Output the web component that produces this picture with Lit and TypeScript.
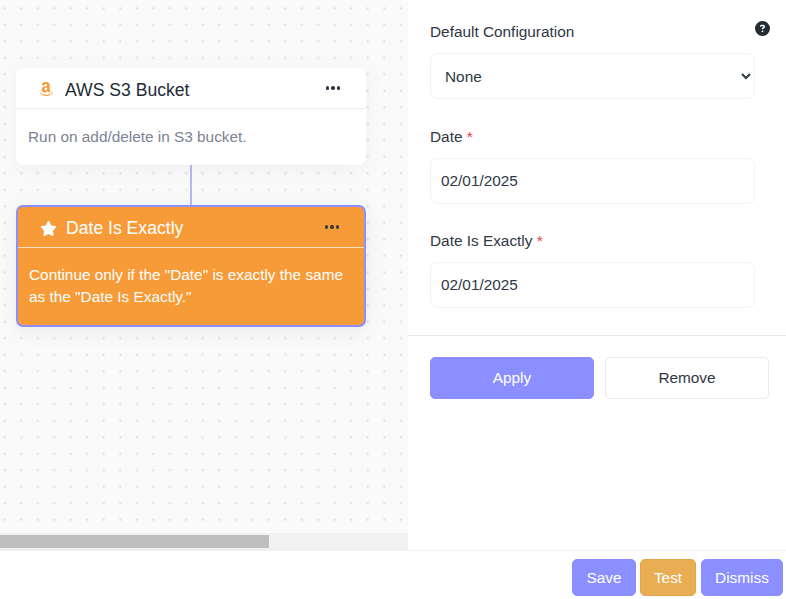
import { LitElement, html, css, svg } from "lit";
import { customElement } from "lit/decorators.js";

const amazon = svg`<path d="M257.2 162.7c-48.7 1.8-169.5 15.5-169.5 117.5 0 109.5 138.3 114 183.5 43.2 6.5 10.2 35.4 37.5 45.3 46.8l56.8-56S341 288.9 341 261.4V114.3C341 89 316.5 32 228.7 32 140.7 32 94 87 94 136.3l73.5 6.8c16.3-49.5 54.2-49.5 54.2-49.5 40.7-.1 35.5 29.8 35.5 69.1zm0 86.8c0 80-84.2 68-84.2 17.2 0-47.2 50.5-56.7 84.2-57.8v40.6zm136 163.5c-7.7 10-70 67-174.5 67S34.2 408.5 9.7 379c-6.8-7.7 1-11.3 5.5-8.3C88.5 415.2 203 488.5 387.7 401c7.5-3.7 13.3 2 5.5 12zm39.8 2.2c-6.5 15.8-16 26.8-21.2 31-5.5 4.5-9.5 2.7-6.5-3.8s19.3-46.5 12.7-55c-6.5-8.3-37-4.3-48-3.2-10.8 1-13 2-14-.3-2.3-5.7 21.7-15.5 37.5-17.5 15.7-1.8 41-.8 46 5.7 3.7 5.1 0 27.1-6.5 43.1z"/>`;
const star = svg`<path d="M316.9 18C311.6 7 300.4 0 288.1 0s-23.4 7-28.8 18L195 150.3 51.4 171.5c-12 1.8-22 10.2-25.7 21.7s-.7 24.2 7.9 32.7L137.8 329 113.2 474.7c-2 12 3 24.2 12.9 31.3s23 8 33.8 2.3l128.3-68.5 128.3 68.5c10.8 5.7 23.9 4.9 33.8-2.3s14.9-19.3 12.9-31.3L438.5 329 542.7 225.9c8.6-8.5 11.7-21.2 7.9-32.7s-13.7-19.9-25.7-21.7L381.2 150.3 316.9 18z"/>`;
const question = svg`<path d="M256 512A256 256 0 1 0 256 0a256 256 0 1 0 0 512zM169.8 165.3c7.9-22.3 29.1-37.3 52.8-37.3h58.3c34.9 0 63.1 28.3 63.1 63.1c0 22.6-12.1 43.5-31.7 54.8L280 264.4c-.2 13-10.9 23.6-24 23.6c-13.3 0-24-10.7-24-24V250.5c0-8.6 4.6-16.5 12.1-20.8l44.3-25.4c4.7-2.7 7.6-7.7 7.6-13.1c0-8.4-6.8-15.1-15.1-15.1H222.6c-3.4 0-6.4 2.1-7.5 5.3l-.4 1.2c-4.4 12.5-18.2 19-30.6 14.6s-19-18.2-14.6-30.6l.4-1.2zM224 352a32 32 0 1 1 64 0 32 32 0 1 1 -64 0z"/>`;

@customElement("app-root")
export class AppRoot extends LitElement {
  static styles = css`
    :host { display: block; width: 786px; height: 599px; overflow: hidden; background: #fff;
      font-family: "Liberation Sans", Arial, sans-serif; color: #2b3440; }
    * { box-sizing: border-box; }
    .top { display: flex; height: 550px; }
    .left { width: 408px; display: flex; flex-direction: column; flex: none; }
    .canvas { flex: 1; position: relative; overflow: hidden; background-color: #fafafa;
      background-image: radial-gradient(circle at center, #dadada 0, #e4e4e4 .8px, transparent 1.6px);
      background-size: 16.5px 16.5px; background-position: -3.5px 0px; }
    .track { height: 17px; background: #f1f1f1; padding: 2px 0; }
    .thumb { height: 13px; width: 269px; background: #bfbfbf; }
    .node { position: absolute; left: 16px; width: 350px; border-radius: 7px; }
    .aws { top: 68px; height: 97px; background: #fff; box-shadow: 0 4px 20px rgba(100,100,140,.07); }
    .date { top: 205px; height: 122px; background: #f79b38; border: 2px solid #8b8fff;
      box-shadow: 0 4px 20px rgba(100,100,140,.1); color: #fff; }
    .connector { position: absolute; left: 190px; top: 165px; width: 2px; height: 40px; background: #b5b7fb; }
    .head { display: flex; align-items: center; font-size: 17.6px; }
    .aws .head { height: 41px; margin: 0 1px; border-bottom: 1px solid #e9e9ee; padding: 0 25px 0 22px; color: #232b36; }
    .date .head { height: 41px; border-bottom: 1px solid #fde3c2; padding: 0 25px 0 22px; }
    .head svg.ic { flex: none; }
    .aws .ic { width: 14px; height: 16px; fill: #f79b38; margin: 2px 12px 0 0; }
    .date .ic { width: 17px; height: 15px; fill: #fff; margin: 3px 9px 0 0; }
    .title { flex: 1; }
    .aws .title { padding-top: 4px; }
    .date .title { padding-top: 2px; }
    .dots { display: flex; gap: 2px; }
    .dots i { width: 3.5px; height: 3.5px; border-radius: 50%; background: #2b3440; }
    .date .dots i { background: #3b3a3a; }
    .body { font-size: 15.36px; line-height: 22px; }
    .aws .body { padding: 17px 12px; color: #7d8394; }
    .date .body { padding: 16px 11px; color: #fff; }

    .right { flex: 1; position: relative; padding: 22px 0 0; background: #fff; }
    .fields { padding: 0 31px 0 22px; }
    .help { position: absolute; left: 347px; top: 21px; width: 15px; height: 15px; fill: #212c33; }
    label { display: block; font-size: 15.36px; line-height: 18px; color: #2f3845; padding-top: 1px; margin-bottom: 12px; }
    label span { color: #f23b3b; }
    .field { margin-bottom: 28px; }
    .field.last { margin: -1px 0 0; }
    select, input { display: block; width: 100%; height: 46px; border: 1px solid #f3f3f5; border-radius: 7px;
      background-color: #fff; font: inherit; font-size: 15.36px; color: #2f3845; outline: none; }
    select { padding: 0 0 0 10px; }
    input { padding: 0 10px; }
    .rule { height: 1px; background: #e8e8ec; margin-top: 27px; }
    .actions { display: flex; gap: 11px; padding: 21px 17px 0 22px; }
    .btn { font: inherit; font-size: 15.36px; height: 42px; flex: 1; border-radius: 5px; }
    .apply { background: #8b8fff; color: #fff; border: 1px solid #8b8fff; }
    .remove { background: #fff; color: #2f3845; border: 1px solid #e9e9f0; }

    .footer { height: 49px; border-top: 1px solid #f0f0f0; display: flex; justify-content: flex-end; align-items: flex-start;
      gap: 4px; padding: 8px 3px 0 0; }
    .fb { font: inherit; font-size: 15.36px; height: 37px; border-radius: 5px; color: #fff; padding: 0; }
    .fb.p { background: #8b8fff; border: 1px solid #8b8fff; }
    .fb.o { background: #e9ae54; border: 1px solid #e0a648; }
    .save { width: 64px; } .test { width: 56px; } .dismiss { width: 82px; margin-left: 1px; }
  `;

  render() {
    return html`
      <div class="top">
        <div class="left">
          <div class="canvas">
            <div class="connector"></div>
            <div class="node aws">
              <div class="head">
                <svg class="ic" viewBox="0 0 448 512">${amazon}</svg>
                <span class="title">AWS S3 Bucket</span>
                <div class="dots"><i></i><i></i><i></i></div>
              </div>
              <div class="body">Run on add/delete in S3 bucket.</div>
            </div>
            <div class="node date">
              <div class="head">
                <svg class="ic" viewBox="0 0 576 512">${star}</svg>
                <span class="title">Date Is Exactly</span>
                <div class="dots"><i></i><i></i><i></i></div>
              </div>
              <div class="body">Continue only if the "Date" is exactly the same as the "Date Is Exactly."</div>
            </div>
          </div>
          <div class="track"><div class="thumb"></div></div>
        </div>
        <div class="right">
          <svg class="help" viewBox="0 0 512 512">${question}</svg>
          <div class="fields">
            <div class="field">
              <label>Default Configuration</label>
              <select><option>None</option></select>
            </div>
            <div class="field">
              <label>Date <span>*</span></label>
              <input value="02/01/2025" />
            </div>
            <div class="field last">
              <label>Date Is Exactly <span>*</span></label>
              <input value="02/01/2025" />
            </div>
          </div>
          <div class="rule"></div>
          <div class="actions">
            <button class="btn apply">Apply</button>
            <button class="btn remove">Remove</button>
          </div>
        </div>
      </div>
      <div class="footer">
        <button class="fb p save">Save</button>
        <button class="fb o test">Test</button>
        <button class="fb p dismiss">Dismiss</button>
      </div>
    `;
  }
}
